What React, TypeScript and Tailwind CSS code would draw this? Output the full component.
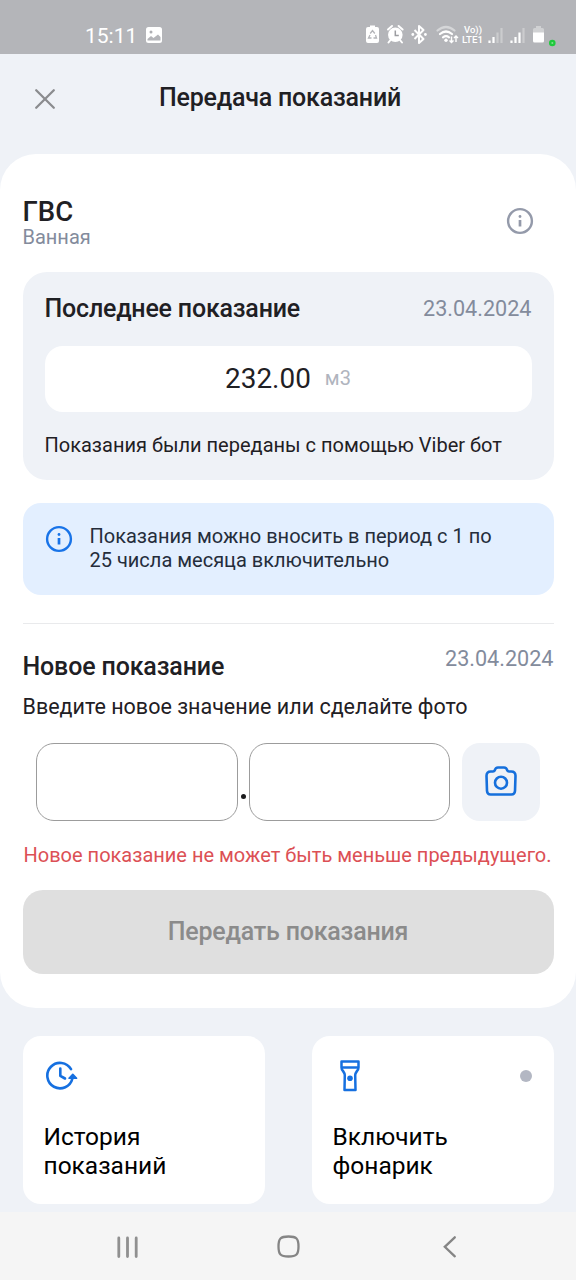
import React from "react";

const InfoIcon = ({ className }: { className: string }) => (
    <svg viewBox="0 0 28 28" className={className} fill="none">
        <circle cx="14" cy="14" r="11.9" stroke="currentColor" strokeWidth="2.4" />
        <circle cx="14" cy="9.5" r="1.4" fill="currentColor" />
        <path d="M14 13v6.5" stroke="currentColor" strokeWidth="2.7" />
    </svg>
);

const StatusIcons = () => (
    <svg viewBox="0 0 200 32" className="w-[200px] h-8 -mt-px" fill="none">
        {/* battery care */}
        <path d="M8 8h2V6.500h5V8h2q2 0 2 2v12q0 2-2 2H8q-2 0-2-2V10q0-2 2-2z" fill="#fff" />
        <path d="M10.200 14.500l2.300-3 2.300 3M15.500 16l1 3h-3M11.500 19h-3l1.500-3" stroke="#b4b5b9" strokeWidth="1.300" />
        {/* alarm */}
        <circle cx="35.300" cy="15.800" r="7.300" fill="#fff" />
        <path d="M28 10.500l4-3.500M42.600 10.500l-4-3.500M30.500 21l-2 2.500M40 21l2 2.500" stroke="#fff" strokeWidth="2" strokeLinecap="round" />
        <path d="M35.300 11.500v5h3.500" stroke="#9c9da1" strokeWidth="1.500" />
        {/* bluetooth */}
        <path d="M54.500 11l9 9-4.500 4V7l4.500 4-9 9" stroke="#fff" strokeWidth="2" strokeLinejoin="round" />
        <circle cx="52.800" cy="15.500" r="1.400" fill="#fff" />
        <circle cx="65.400" cy="15.500" r="1.400" fill="#fff" />
        {/* wifi */}
        <path d="M77.500 11.500q8.500-7 17 0" stroke="#d5d6d8" strokeWidth="2.200" strokeLinecap="round" />
        <path d="M80 15q6-5 12 0M83 18.300q3-2.300 6 0" stroke="#fff" strokeWidth="2.200" strokeLinecap="round" />
        <circle cx="86" cy="21.300" r="1.700" fill="#fff" />
        <path d="M91.500 17.500v6M89.500 21.500l2 2 2-2M96 23v-6M94 19l2-2 2 2" stroke="#fff" strokeWidth="1.400" />
        <text x="104" y="14.400" fontSize="8.200" fontWeight="500" textLength="18" lengthAdjust="spacingAndGlyphs" fill="#fff">Vo))</text>
        <text x="102" y="24.300" fontSize="8.200" fontWeight="500" textLength="21" lengthAdjust="spacingAndGlyphs" fill="#fff">LTE1</text>
        {/* signal, sim 1 and sim 2 */}
        <path d="M129.500 21.500V24M133.500 18v6" stroke="#fff" strokeWidth="2.200" />
        <path d="M137.500 13.500V24M141.500 9v15" stroke="#cbccce" strokeWidth="2.200" />
        <path d="M151.500 21.500V24M155.500 18v6M159.500 13.500V24" stroke="#fff" strokeWidth="2.200" />
        <path d="M163.500 9v15" stroke="#cbccce" strokeWidth="2.200" />
        {/* battery */}
        <path d="M173 14v-3.500q0-1.500 1.500-1.500h1.500V7h5v2h1.500q1.500 0 1.500 1.500V14z" fill="#d0d1d3" />
        <path d="M173 13.500h11V22q0 1.500-1.500 1.500h-8Q173 23.500 173 22z" fill="#fff" />
        <circle cx="192.300" cy="24" r="3.300" fill="#1fc93c" />
        <circle cx="192.300" cy="24" r="1" fill="#7fe08e" />
    </svg>
);

const StatusBar = () => (
    <div className="h-[54px] bg-[#b4b5b9] flex items-center justify-between pl-[85px] pr-[16px] pt-[17px]">
        <div className="flex items-center gap-[9px] text-white">
            <span className="w-[52px] text-[21px] leading-8">15:11</span>
            <svg viewBox="0 0 16 16" className="w-4 h-4 mb-[1px]">
                <rect width="16" height="16" rx="2.500" fill="#fff" />
                <circle cx="5" cy="5" r="1.500" fill="#aeafb3" />
                <path d="M1.500 13.500V12l3.500-3 2.500 2L12 7.500l2.500 2.500v3.500z" fill="#b4b5b9" />
            </svg>
        </div>
        <StatusIcons />
    </div>
);

const Header = () => (
    <header className="h-[100px] flex items-start justify-center relative">
        <button className="absolute left-[34px] top-[34px]">
            <svg viewBox="0 0 22 22" className="w-[22px] h-[22px]">
                <path d="M2.200 2.200l17.600 17.600M19.800 2.200L2.200 19.800" stroke="#8b8c8f" strokeWidth="2.300" strokeLinecap="round" />
            </svg>
        </button>
        <h1 className="mt-[28px] ml-[-16px] text-[25px] tracking-[-0.2px] leading-8 font-medium whitespace-nowrap">Передача показаний</h1>
    </header>
);

const LastReading = () => (
    <section className="h-[208px] rounded-[24px] bg-[#eff2f7] px-[22px] pt-[21px]">
        <div className="flex items-center justify-between">
            <h3 className="text-[25px] tracking-[-0.2px] leading-8 font-medium">Последнее показание</h3>
            <span className="text-[21.600px] leading-8 text-[#838b9c]">23.04.2024</span>
        </div>
        <div className="mt-[21px] h-[66px] rounded-[18px] bg-white flex items-center justify-center gap-[14px]">
            <span className="text-[27.900px]">232.00</span>
            <span className="mb-[2px] text-[20px] text-[#b0b4be]">м3</span>
        </div>
        <p className="mt-[19px] text-[20px] leading-7 whitespace-nowrap">Показания были переданы с помощью Viber бот</p>
    </section>
);

const NewReading = () => (
    <section>
        <div className="flex items-start justify-between">
            <h3 className="mt-[27px] text-[25px] tracking-[-0.15px] leading-8 font-medium">Новое показание</h3>
            <span className="mt-[19px] text-[21.600px] leading-8 text-[#838b9c]">23.04.2024</span>
        </div>
        <p className="mt-[10px] text-[21.500px] leading-7 whitespace-nowrap">Введите новое значение или сделайте фото</p>
        <div className="mt-[22px] ml-[13px] flex">
            <input className="w-[202px] h-[78px] rounded-[18px] border border-[#9c9c9c] bg-white px-4 text-[28px]" />
            <span className="w-[11px] pt-[51px] flex justify-center">
                <span className="w-[5px] h-[5px] rounded-full bg-[#1b1b1d]" />
            </span>
            <input className="w-[201px] h-[78px] rounded-[18px] border border-[#9c9c9c] bg-white px-4 text-[28px]" />
            <button className="ml-[12px] w-[78px] h-[78px] rounded-[18px] bg-[#eff2f7] flex items-center justify-center">
                <svg viewBox="0 0 32 30" className="w-8 h-[30px] mb-[2px]" fill="none" stroke="#1670dc" strokeWidth="2.600" strokeLinejoin="round">
                    <path d="M9.500 4.800Q10.500 1.500 13 1.500h6q2.500 0 3.500 3.300Q22.800 5.500 24 5.500h2.200q4.300 0 4.300 4.300L30 25q-.3 3.500-3.600 3.500H5.600Q2.300 28.500 2 25L1.500 9.800q0-4.300 4.300-4.300H8q1.200 0 1.500-.7z" />
                    <circle cx="16" cy="16.700" r="6" />
                </svg>
            </button>
        </div>
        <p className="mt-[20px] ml-[1px] text-[20px] leading-7 text-[#dc5055] whitespace-nowrap">Новое показание не может быть меньше предыдущего.</p>
        <button className="mt-[21px] w-full h-[84px] rounded-[20px] bg-[#dfdfdf] text-[#8b8b8b] text-[25px] tracking-[-0.2px] font-medium">Передать показания</button>
    </section>
);

const HistoryIcon = () => (
    <svg viewBox="0 0 33 30" className="w-[33px] h-[30px]" fill="none" stroke="#1670e0" strokeWidth="2.600" strokeLinecap="round" strokeLinejoin="round">
        <path d="M26 8.200A12.700 12.700 0 1 0 27.400 17.500" />
        <path d="M15.300 7.500V14.800l4.700 2.700" />
        <path d="M24 17.300l3.800-3.900 3.800 3.900z" fill="#1670e0" strokeWidth="1.600" />
    </svg>
);

const FlashlightIcon = () => (
    <svg viewBox="0 0 20 32" className="w-5 h-8" fill="none" stroke="#1670e0" strokeWidth="2.500" strokeLinejoin="round">
        <path d="M1.500 1.500h17v6q0 2-1.500 3.500l-1.200 2q-.6 1-.6 2.500l.3 14.500H4.500l.3-14.500q0-1.500-.6-2.500L3 11Q1.500 9.500 1.500 7.500z" />
        <path d="M1.500 7.500h17" />
        <circle cx="10" cy="18.300" r="2.800" fill="#1670e0" stroke="none" />
    </svg>
);

const Tile = ({ icon, lines, dot }: { icon: React.ReactNode; lines: string[]; dot?: boolean }) => (
    <button className="w-[242px] h-[168px] rounded-[18px] bg-white px-[22px] pt-[24px] text-left flex flex-col text-black">
        <div className="w-full h-8 flex items-center justify-between">
            {icon}
            {dot && <span className="w-3 h-3 rounded-full bg-[#b3b7c3]" />}
        </div>
        <div className="mt-[30px] -ml-px text-[24.500px] leading-[29px]">
            {lines.map(l => <div key={l}>{l}</div>)}
        </div>
    </button>
);

const NavBar = () => (
    <nav className="h-[68px] bg-[#f5f5f5] flex items-center justify-between pl-[115px] pr-[114px] pt-[2px]">
        <svg viewBox="0 0 24 24" className="w-6 h-6" stroke="#909090" strokeWidth="2.800" strokeLinecap="round">
            <path d="M3.800 3v18.500M12.500 3v18.500M21.200 3v18.500" />
        </svg>
        <svg viewBox="0 0 24 24" className="w-6 h-6" fill="none" stroke="#858585" strokeWidth="2.300">
            <path d="M11.500 1.500q6 0 8 2t2 8-2 8-8 2-8-2-2-8 2-8 8-2z" />
        </svg>
        <svg viewBox="0 0 24 24" className="w-6 h-6" fill="none" stroke="#858585" strokeWidth="2.300" strokeLinecap="round">
            <path d="M16.800 2.300L6.800 11.800l10 9.500" />
        </svg>
    </nav>
);

export default function App() {
    return (
        <div className="w-[576px] h-[1280px] overflow-hidden bg-[#eff2f7] font-['Roboto',sans-serif] text-[#1f2024] flex flex-col">
            <StatusBar />
            <Header />
            <main className="h-[854px] rounded-[36px] bg-white px-[22.500px] pt-[42px]">
                <div className="h-[76px] flex items-start justify-between">
                    <div>
                        <h2 className="text-[27.500px] leading-8 font-medium">ГВС</h2>
                        <p className="-mt-px text-[20px] leading-5 text-[#838b9c]">Ванная</p>
                    </div>
                    <InfoIcon className="w-7 h-7 mt-[11px] mr-[20px] text-[#949aaa]" />
                </div>
                <LastReading />
                <div className="mt-[23px] h-[92px] rounded-[18px] bg-[#e3efff] pl-[22px] pt-[21px] flex gap-[17px]">
                    <InfoIcon className="w-7 h-7 mt-[1px] text-[#1873e8]" />
                    <p className="text-[20px] leading-6 text-[#252d3b] whitespace-nowrap">Показания можно вносить в период с 1 по<br />25 числа месяца включительно</p>
                </div>
                <div className="mt-7 h-px bg-[#e9eaec]" />
                <NewReading />
            </main>
            <div className="h-[204px] pt-7 px-[22.500px] flex justify-between">
                <Tile icon={<HistoryIcon />} lines={["История", "показаний"]} />
                <Tile icon={<span className="pl-[6px]"><FlashlightIcon /></span>} lines={["Включить", "фонарик"]} dot />
            </div>
            <NavBar />
        </div>
    );
}
